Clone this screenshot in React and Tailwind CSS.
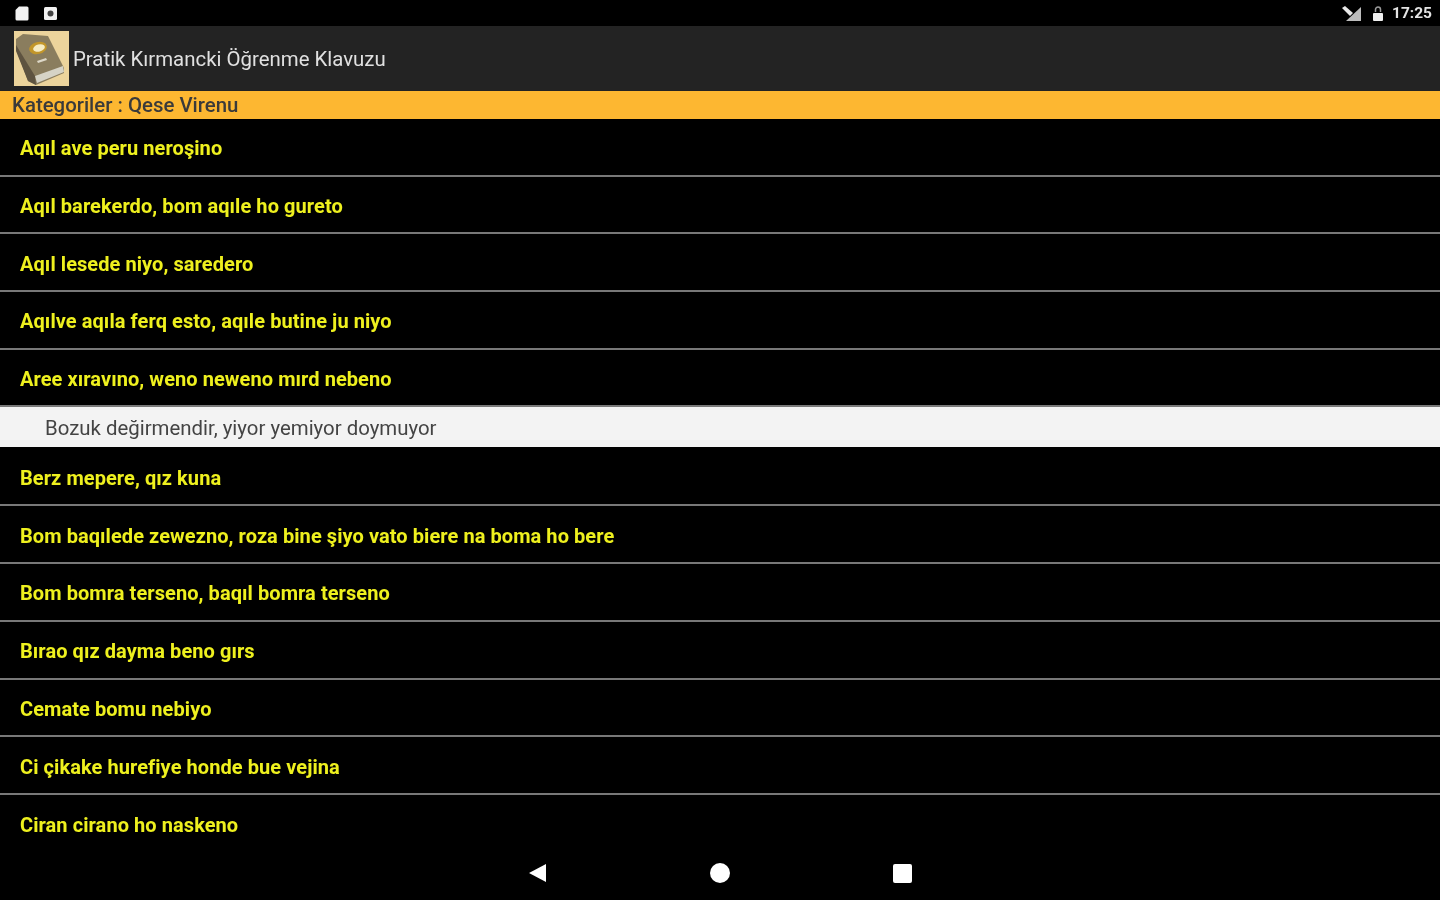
const rowsA = [
  "Aqıl ave peru neroşino",
  "Aqıl barekerdo, bom aqıle ho gureto",
  "Aqıl lesede niyo, saredero",
  "Aqılve aqıla ferq esto, aqıle butine ju niyo",
  "Aree xıravıno, weno neweno mırd nebeno",
];
const rowsB = [
  "Berz mepere, qız kuna",
  "Bom baqılede zewezno, roza bine şiyo vato biere na boma ho bere",
  "Bom bomra terseno, baqıl bomra terseno",
  "Bırao qız dayma beno gırs",
  "Cemate bomu nebiyo",
  "Ci çikake hurefiye honde bue vejina",
  "Ciran cirano ho naskeno",
];

function Row({ text, last, tall }) {
  return (
    <div className={`flex items-center pl-[20px] ${tall ? "h-[57.8px]" : "h-[57.7px]"} ${last ? "pt-[2px]" : "border-b-2 border-[#787878] pt-[3px]"}`}>
      <span className="text-[20px] font-bold tracking-[0.07px] text-[#eef01e] blur-[0.6px]">{text}</span>
    </div>
  );
}

function Book() {
  return (
    <svg width="55" height="55" viewBox="0 0 55 55" className="blur-[0.7px]">
      <rect width="55" height="55" fill="#ecd49c" />
      <path d="M2 8 L9 3 L34 5 L50 37 L50 42 L22 54 L14 50 L2 18 Z" fill="#8a7d5e" />
      <path d="M2 14 L2 20 L14 50 L22 54 L21 45 Z" fill="#5e5340" />
      <path d="M21 45 L49 35 L50 41 L23 52 Z" fill="#d6d3c6" />
      <ellipse cx="24" cy="17" rx="9" ry="6" fill="#c2962a" transform="rotate(-15 24 17)" />
      <ellipse cx="25" cy="17" rx="6" ry="3.5" fill="#f6ecc4" transform="rotate(-15 25 17)" />
      <path d="M23 30 L32 27 L33 29 L24 32 Z" fill="#ddd8c8" />
    </svg>
  );
}

function StatusLeft() {
  return (
    <div className="flex items-center gap-[15px] pl-[15px] blur-[0.5px]">
      <svg width="14" height="15" viewBox="0 0 14 15">
        <path d="M4 0.5 H12 a1.5 1.5 0 0 1 1.5 1.5 V13 a1.5 1.5 0 0 1 -1.5 1.5 H2 a1.5 1.5 0 0 1 -1.5 -1.5 V4 Z" fill="#f2f2f2" />
      </svg>
      <svg width="13" height="13" viewBox="0 0 13 13">
        <rect width="13" height="13" rx="1.5" fill="#f2f2f2" />
        <circle cx="6.5" cy="6.5" r="3" fill="#444" />
      </svg>
    </div>
  );
}

function StatusRight() {
  return (
    <div className="flex items-center pr-[8px] pt-[2px]">
      <svg width="22" height="16" viewBox="0 0 22 16" className="mr-[9px] blur-[0.6px]">
        <path d="M20 1 V15 H5 Z" fill="#bdbdbd" />
        <path d="M1 2 L4 0 L12 7 L9 10 Z" fill="#e8e8e8" />
      </svg>
      <svg width="12" height="16" viewBox="0 0 12 16" className="mr-[8px] blur-[0.5px]">
        <path d="M3.5 6 V3.5 a2.5 2.5 0 0 1 5 0 V6" fill="none" stroke="#9a9a9a" strokeWidth="1.5" />
        <rect x="1" y="7" width="10" height="8" rx="1" fill="#f0f0f0" />
      </svg>
      <span className="text-[15.5px] font-bold text-[#e4e4e4] blur-[0.6px]">17:25</span>
    </div>
  );
}

export default function App() {
  return (
    <div className="flex h-[900px] w-[1440px] flex-col overflow-hidden bg-black font-['Roboto',sans-serif]">
      <div className="flex h-[26px] shrink-0 items-center justify-between bg-black">
        <StatusLeft />
        <StatusRight />
      </div>
      <div className="flex h-[65px] shrink-0 items-center bg-[#232323] pl-[14px]">
        <Book />
        <span className="ml-[4px] pt-[2px] text-[20.4px] text-[#e0e0e0] blur-[0.6px]">Pratik Kırmancki Öğrenme Klavuzu</span>
      </div>
      <div className="flex h-[28px] shrink-0 items-center bg-[#fdb731] pl-[12px]">
        <span className="text-[20.4px] font-medium text-[#3a3a3a] blur-[0.6px]">Kategoriler : Qese Virenu</span>
      </div>
      <div className="flex flex-col">
        {rowsA.map((t) => (
          <Row key={t} text={t} />
        ))}
      </div>
      <div className="mb-[1px] flex h-[40px] shrink-0 items-center bg-[#f3f3f3] pl-[45px] pt-[1px]">
        <span className="text-[20.4px] text-[#444] blur-[0.6px]">Bozuk değirmendir, yiyor yemiyor doymuyor</span>
      </div>
      <div className="flex flex-col">
        {rowsB.map((t, i) => (
          <Row key={t} text={t} tall last={i === rowsB.length - 1} />
        ))}
      </div>
      <div className="relative flex-1">
        <div className="absolute bottom-[17px] left-0 flex w-full items-center justify-center">
          <svg width="20" height="20" viewBox="0 0 20 20" className="mr-[162px]">
            <path d="M18 1 V19 L1 10 Z" fill="#fff" />
          </svg>
          <div className="h-[20px] w-[20px] rounded-full bg-white" />
          <div className="ml-[163px] h-[19px] w-[19px] rounded-[2px] bg-white" />
        </div>
      </div>
    </div>
  );
}
